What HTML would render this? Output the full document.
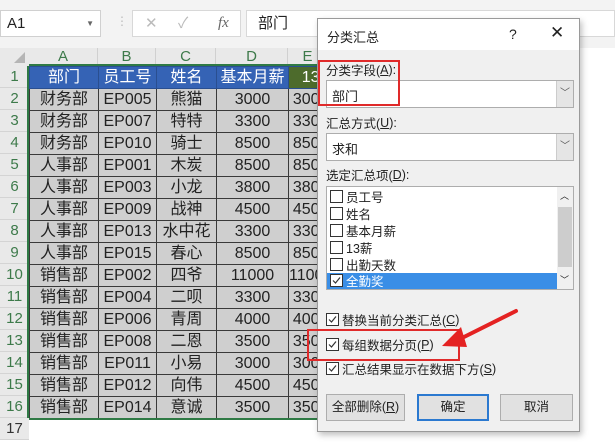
<!DOCTYPE html>
<html><head><meta charset="utf-8"><style>
*{margin:0;padding:0;box-sizing:border-box}
body{width:615px;height:443px;overflow:hidden;background:#fff;position:relative;font-family:"Liberation Sans","Noto Sans CJK SC",sans-serif;color:#222}
.a{position:absolute}
table{border-collapse:collapse;table-layout:fixed;position:absolute;left:29px;top:66px}
td{height:22px;line-height:20px;border:1px solid #3a3a3a;text-align:center;font-size:16px;background:#cfcfcf;white-space:nowrap;overflow:hidden;padding:0}
tr.h td{background:#3563b5;color:#fff;border-color:#2a4f90}
tr.h td.g{background:#4d6b2c}
.rh{position:absolute;left:0;width:29px;height:22px;background:#e9e9e9;color:#3d7a4a;font-size:15px;text-align:center;line-height:22px;border-bottom:1px solid #d4d4d4}
.ch{position:absolute;top:48px;height:18px;background:#e9e9e9;color:#3d7a4a;font-size:15px;text-align:center;line-height:18px;border-right:1px solid #d0d0d0}
.dlg{left:317px;top:18px;width:263px;height:414px;background:#f0f0f0;border:1px solid #9a9a9a;box-shadow:2px 3px 6px rgba(0,0,0,.25);font-size:12.5px}
.lbl{position:absolute;left:8px;font-size:12.5px;display:flex;align-items:center}
.cb{position:absolute;left:8px;width:248px;height:28px;background:#fff;border:1px solid #adadad}
.cb span{position:absolute;left:5px;top:5px;font-size:13px}
.dd{position:absolute;right:0;top:0;width:17px;height:26px;background:#e5e5e5;border-left:1px solid #ccc;font-size:10px;color:#555;text-align:center;line-height:26px}
.chk{display:inline-block;width:13px;height:13px;border:1px solid #333;background:#fff;margin-right:3px;position:relative;flex:none}
.chk svg{position:absolute;left:1px;top:1px}
.it{position:absolute;left:3px;height:17px;font-size:12.5px;display:flex;align-items:center}
.btn{position:absolute;top:375px;height:27px;background:#e1e1e1;border:1px solid #adadad;text-align:center;line-height:25px;font-size:12.5px}
</style></head><body>
<div class="a" style="left:0;top:0;width:615px;height:48px;background:#f3f3f3"></div>
<div class="a" style="left:0;top:10px;width:101px;height:27px;background:#fff;border:1px solid #d0d0d0;font-size:15px;line-height:25px;padding-left:6px">A1<span style="position:absolute;right:6px;font-size:8px;color:#666">▼</span></div>
<div class="a" style="left:116px;top:14px;color:#bbb;font-size:12px">⋮</div>
<div class="a" style="left:132px;top:10px;width:109px;height:27px;background:#fff;border:1px solid #d8d8d8;color:#bbb;font-size:15px;line-height:25px"><span style="position:absolute;left:12px">✕</span><span style="position:absolute;left:45px">✓</span><span style="position:absolute;left:85px;color:#666;font-style:italic;font-family:'Liberation Serif',serif">fx</span></div>
<div class="a" style="left:246px;top:10px;width:369px;height:27px;background:#fff;border:1px solid #d8d8d8;font-size:15px;line-height:25px;padding-left:11px">部门</div>
<div class="a" style="left:0;top:48px;width:29px;height:18px;background:#e9e9e9"></div>
<div class="a" style="left:14px;top:52px;width:0;height:0;border-left:11px solid transparent;border-bottom:11px solid #b5b5b5"></div>
<div class="ch" style="left:29px;width:69px">A</div>
<div class="ch" style="left:98px;width:58px">B</div>
<div class="ch" style="left:156px;width:60px">C</div>
<div class="ch" style="left:216px;width:72px">D</div>
<div class="ch" style="left:288px;width:40px">E</div>
<div class="a" style="left:29px;top:64px;width:290px;height:2px;background:#2f7a45"></div>
<div class="rh" style="top:66px">1</div><div class="rh" style="top:88px">2</div><div class="rh" style="top:110px">3</div><div class="rh" style="top:132px">4</div><div class="rh" style="top:154px">5</div><div class="rh" style="top:176px">6</div><div class="rh" style="top:198px">7</div><div class="rh" style="top:220px">8</div><div class="rh" style="top:242px">9</div><div class="rh" style="top:264px">10</div><div class="rh" style="top:286px">11</div><div class="rh" style="top:308px">12</div><div class="rh" style="top:330px">13</div><div class="rh" style="top:352px">14</div><div class="rh" style="top:374px">15</div><div class="rh" style="top:396px">16</div><div class="rh" style="top:418px;color:#333">17</div>
<div class="a" style="left:27px;top:66px;width:2px;height:352px;background:#2f7a45"></div>
<table>
<colgroup><col style="width:69px"><col style="width:58px"><col style="width:60px"><col style="width:72px"><col style="width:40px"></colgroup>
<tr class="h"><td>部门</td><td>员工号</td><td>姓名</td><td>基本月薪</td><td class="g">13</td></tr>
<tr><td>财务部</td><td>EP005</td><td>熊猫</td><td>3000</td><td>3000</td></tr>
<tr><td>财务部</td><td>EP007</td><td>特特</td><td>3300</td><td>3300</td></tr>
<tr><td>财务部</td><td>EP010</td><td>骑士</td><td>8500</td><td>8500</td></tr>
<tr><td>人事部</td><td>EP001</td><td>木炭</td><td>8500</td><td>8500</td></tr>
<tr><td>人事部</td><td>EP003</td><td>小龙</td><td>3800</td><td>3800</td></tr>
<tr><td>人事部</td><td>EP009</td><td>战神</td><td>4500</td><td>4500</td></tr>
<tr><td>人事部</td><td>EP013</td><td>水中花</td><td>3300</td><td>3300</td></tr>
<tr><td>人事部</td><td>EP015</td><td>春心</td><td>8500</td><td>8500</td></tr>
<tr><td>销售部</td><td>EP002</td><td>四爷</td><td>11000</td><td>11000</td></tr>
<tr><td>销售部</td><td>EP004</td><td>二呗</td><td>3300</td><td>3300</td></tr>
<tr><td>销售部</td><td>EP006</td><td>青周</td><td>4000</td><td>4000</td></tr>
<tr><td>销售部</td><td>EP008</td><td>二恩</td><td>3500</td><td>3500</td></tr>
<tr><td>销售部</td><td>EP011</td><td>小易</td><td>3000</td><td>3000</td></tr>
<tr><td>销售部</td><td>EP012</td><td>向伟</td><td>4500</td><td>4500</td></tr>
<tr><td>销售部</td><td>EP014</td><td>意诚</td><td>3500</td><td>3500</td></tr>
</table>
<div class="a" style="left:29px;top:418px;width:290px;height:2px;background:#2f7a45"></div>
<div class="a dlg">
 <div class="a" style="left:0;top:0;width:261px;height:31px;background:#fff"></div>
 <div class="a" style="left:9px;top:8px;font-size:13px">分类汇总</div>
 <div class="a" style="left:191px;top:7px;font-size:14px">?</div>
 <div class="a" style="left:232px;top:4px;font-size:17px">✕</div>
 <div class="lbl" style="top:41px">分类字段(<u>A</u>):</div>
 <div class="cb" style="top:61px"><span>部门</span><div class="dd">﹀</div></div>
 <div class="lbl" style="top:94px">汇总方式(<u>U</u>):</div>
 <div class="cb" style="top:114px"><span>求和</span><div class="dd">﹀</div></div>
 <div class="lbl" style="top:146px">选定汇总项(<u>D</u>):</div>
 <div class="a" style="left:8px;top:167px;width:248px;height:104px;background:#fff;border:1px solid #adadad">
  <div class="it" style="top:1px"><span class="chk"></span>员工号</div>
  <div class="it" style="top:18px"><span class="chk"></span>姓名</div>
  <div class="it" style="top:35px"><span class="chk"></span>基本月薪</div>
  <div class="it" style="top:52px"><span class="chk"></span>13薪</div>
  <div class="it" style="top:69px"><span class="chk"></span>出勤天数</div>
  <div class="a" style="left:0;top:86px;width:230px;height:16px;background:#3a8ee6"></div>
  <div class="it" style="top:85px;color:#fff"><span class="chk"><svg width="9" height="9"><path d="M1 4.5 L3.5 7 L8 1.5" stroke="#333" fill="none" stroke-width="1.2"/></svg></span>全勤奖</div>
  <div class="a" style="right:0;top:0;width:16px;height:102px;background:#f0f0f0"><div style="position:absolute;left:1px;top:20px;width:14px;height:60px;background:#cdcdcd"></div><div style="position:absolute;left:3px;top:2px;font-size:9px">︿</div><div style="position:absolute;left:3px;top:86px;font-size:9px">﹀</div></div>
 </div>
 <div class="lbl" style="top:291px"><span class="chk"><svg width="9" height="9"><path d="M1 4.5 L3.5 7 L8 1.5" stroke="#333" fill="none" stroke-width="1.2"/></svg></span>替换当前分类汇总(<u>C</u>)</div>
 <div class="lbl" style="top:316px"><span class="chk"><svg width="9" height="9"><path d="M1 4.5 L3.5 7 L8 1.5" stroke="#333" fill="none" stroke-width="1.2"/></svg></span>每组数据分页(<u>P</u>)</div>
 <div class="lbl" style="top:340px"><span class="chk"><svg width="9" height="9"><path d="M1 4.5 L3.5 7 L8 1.5" stroke="#333" fill="none" stroke-width="1.2"/></svg></span>汇总结果显示在数据下方(<u>S</u>)</div>
 <div class="btn" style="left:8px;width:79px">全部删除(<u>R</u>)</div>
 <div class="btn" style="left:99px;width:72px;border:2px solid #2b79d0;line-height:23px">确定</div>
 <div class="btn" style="left:182px;width:73px">取消</div>
</div>
<div class="a" style="left:318px;top:60px;width:82px;height:46px;border:2px solid #e02a2a"></div>
<div class="a" style="left:307px;top:329px;width:153px;height:32px;border:2px solid #e02a2a"></div>
<svg class="a" style="left:0;top:0" width="615" height="443"><line x1="516" y1="311" x2="458" y2="340" stroke="#e42222" stroke-width="4" stroke-linecap="round"/><polygon points="442,346 461,327 467,347" fill="#e42222"/></svg>
</body></html>
